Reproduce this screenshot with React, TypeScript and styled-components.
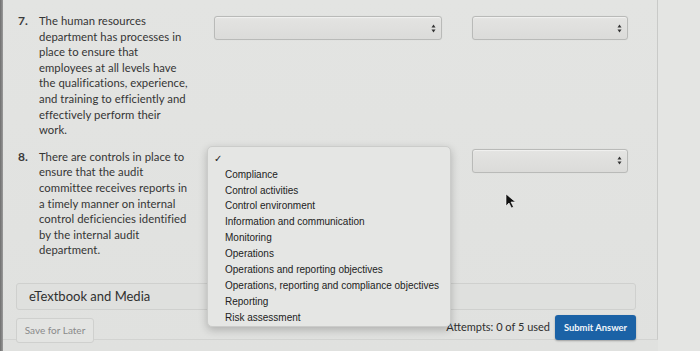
import React from 'react';
import styled, { createGlobalStyle } from 'styled-components';

const GlobalStyle = createGlobalStyle`
  html, body {
    margin: 0;
    padding: 0;
    background: #e1e2e0;
  }
`;

const Screen = styled.div`
  display: flex;
  width: 700px;
  height: 351px;
  overflow: hidden;
  background: linear-gradient(180deg, #e3e4e2 0%, #e0e1df 100%);
  font-family: Lato, "Open Sans", sans-serif;
  color: #363636;
`;

const Edge = styled.div`
  width: 3px;
  flex: none;
  background: linear-gradient(90deg, #6f6f6f, #9a9a9a);
`;

const Panel = styled.div`
  position: relative;
  width: 655px;
  height: 340px;
  flex: none;
  padding: 13px 21px 0 13px;
  box-sizing: border-box;
  border-right: 1px solid #c9cac8;
  border-bottom: 1px solid #d2d3d1;
`;

const Side = styled.div`
  flex: 1;
  background: #e4e5e3;
`;

const Question = styled.div<{ gap?: number }>`
  position: relative;
  display: grid;
  grid-template-columns: 23px 175px 228px 30px 156px;
  align-items: start;
  margin-top: ${p => p.gap ?? 0}px;
`;

const Num = styled.span`
  padding-left: 2px;
  font-size: 12px;
  font-weight: 700;
  line-height: 15.6px;
  color: #3a3a3a;
`;

const Text = styled.p`
  margin: 0;
  font-size: 11.3px;
  line-height: 15.6px;
  letter-spacing: 0.05px;
  color: #353535;
  white-space: nowrap;
`;

const SelectBox = styled.div<{ col: number; top?: number }>`
  grid-column: ${p => p.col};
  margin-top: ${p => p.top ?? 0}px;
  height: 24px;
  box-sizing: border-box;
  border: 1px solid #b9bab8;
  border-radius: 3px;
  background: linear-gradient(180deg, #e4e4e2 0%, #dbdbd9 100%);
  box-shadow: inset 0 1px 1px rgba(255, 255, 255, 0.5), 0 0 1px rgba(0, 0, 0, 0.1);
  display: flex;
  align-items: center;
  justify-content: flex-end;
  padding-right: 5px;
`;

const Menu = styled.ul`
  position: absolute;
  left: 191px;
  top: -3px;
  width: 244px;
  height: 181px;
  margin: 0;
  padding: 4px 0 0;
  box-sizing: border-box;
  list-style: none;
  background: #e5e6e4;
  border: 1px solid #cbccca;
  border-radius: 5px;
  box-shadow: 0 3px 8px rgba(0, 0, 0, 0.22);
  font-family: "Liberation Sans", Arial, sans-serif;
  font-size: 10px;
  color: #222;
  z-index: 2;
`;

const MenuItem = styled.li<{ checked?: boolean }>`
  height: 15.9px;
  line-height: 15.9px;
  padding-left: ${p => (p.checked ? 6 : 17)}px;
  white-space: nowrap;
`;

const Cursor = styled.div`
  position: absolute;
  left: 489px;
  top: 44px;
  z-index: 3;
`;

const Media = styled.div`
  margin-top: 25px;
  width: 620px;
  height: 27px;
  box-sizing: border-box;
  display: flex;
  align-items: center;
  padding-left: 12px;
  background: #dfe0de;
  border: 1px solid #cfd0ce;
  border-radius: 3px;
  font-size: 13px;
  color: #303030;
`;

const Footer = styled.div`
  margin-top: 5px;
  width: 620px;
  display: flex;
  align-items: flex-start;
`;

const SaveButton = styled.button`
  margin-top: 3px;
  width: 78px;
  height: 25px;
  padding: 0;
  border: 1px solid #cfd0ce;
  border-radius: 3px;
  background: #e3e4e2;
  font-family: Lato, sans-serif;
  font-size: 10px;
  color: #8a8a8a;
`;

const Attempts = styled.span`
  margin-left: auto;
  margin-right: 5px;
  margin-top: 5px;
  font-size: 11px;
  color: #2e2e2e;
`;

const SubmitButton = styled.button`
  width: 81px;
  height: 25px;
  padding: 0;
  border: none;
  border-radius: 3px;
  background: #1b62a6;
  font-family: Lato, sans-serif;
  font-weight: 700;
  font-size: 9.4px;
  color: #f2f6fa;
  box-shadow: 0 1px 2px rgba(0, 0, 0, 0.3);
`;

const Arrows = () => (
  <svg width="5" height="9" viewBox="0 0 5 9">
    <path d="M2.5 0.5 L4.5 3.5 L0.5 3.5 Z" fill="#333" />
    <path d="M2.5 8.5 L4.5 5.5 L0.5 5.5 Z" fill="#333" />
  </svg>
);

const Pointer = () => (
  <svg width="12" height="16" viewBox="0 0 12 16">
    <path d="M1 1 L1 13 L4 10 L6.5 15 L8.5 14 L6 9 L10.5 9 Z" fill="#111" stroke="#fff" strokeWidth="0.6" />
  </svg>
);

const options = [
  'Compliance',
  'Control activities',
  'Control environment',
  'Information and communication',
  'Monitoring',
  'Operations',
  'Operations and reporting objectives',
  'Operations, reporting and compliance objectives',
  'Reporting',
  'Risk assessment',
];

const q7 = [
  'The human resources',
  'department has processes in',
  'place to ensure that',
  'employees at all levels have',
  'the qualifications, experience,',
  'and training to efficiently and',
  'effectively perform their',
  'work.',
];

const q8 = [
  'There are controls in place to',
  'ensure that the audit',
  'committee receives reports in',
  'a timely manner on internal',
  'control deficiencies identified',
  'by the internal audit',
  'department.',
];

const Lines = ({ lines }: { lines: string[] }) => (
  <Text>
    {lines.map((l, i) => (
      <React.Fragment key={i}>
        {l}
        {i < lines.length - 1 && <br />}
      </React.Fragment>
    ))}
  </Text>
);

function App() {
  return (
    <>
      <GlobalStyle />
      <Screen>
        <Edge />
        <Panel>
          <Question>
            <Num>7.</Num>
            <Lines lines={q7} />
            <SelectBox col={3} top={3}><Arrows /></SelectBox>
            <SelectBox col={5} top={3}><Arrows /></SelectBox>
          </Question>
          <Question gap={11}>
            <Num>8.</Num>
            <Lines lines={q8} />
            <SelectBox col={5}><Arrows /></SelectBox>
            <Menu>
              <MenuItem checked>✓</MenuItem>
              {options.map(o => (
                <MenuItem key={o}>{o}</MenuItem>
              ))}
            </Menu>
            <Cursor><Pointer /></Cursor>
          </Question>
          <Media>eTextbook and Media</Media>
          <Footer>
            <SaveButton>Save for Later</SaveButton>
            <Attempts>Attempts: 0 of 5 used</Attempts>
            <SubmitButton>Submit Answer</SubmitButton>
          </Footer>
        </Panel>
        <Side />
      </Screen>
    </>
  );
}

export default App;
